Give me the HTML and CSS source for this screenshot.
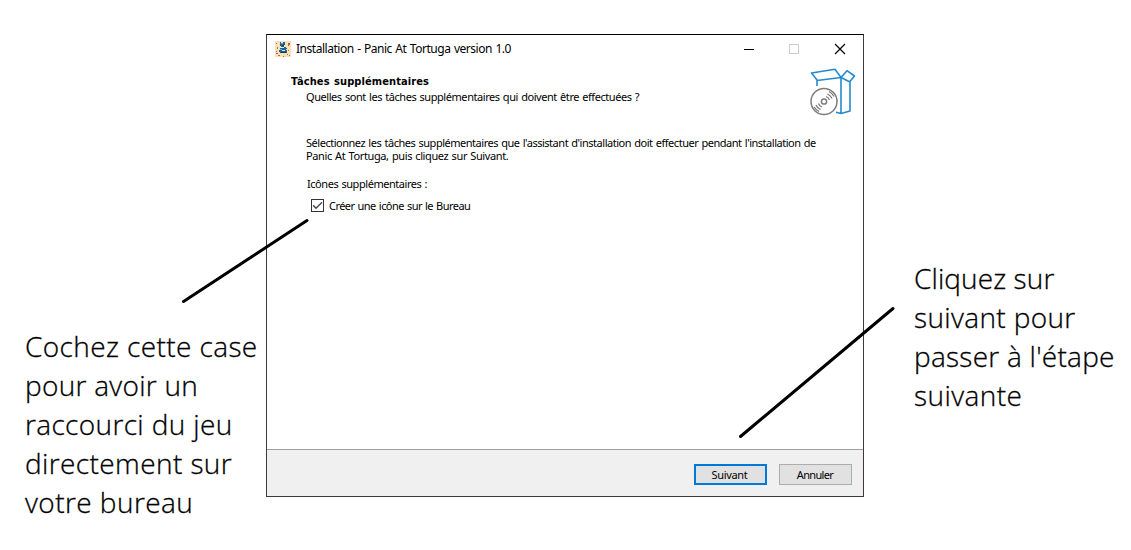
FILE: index.html
```html
<!DOCTYPE html>
<html lang="fr">
<head>
<meta charset="utf-8">
<title>Installation - Panic At Tortuga</title>
<link rel="stylesheet" href="styles.css">
</head>
<body>
<main class="guide">
  <aside class="note note-left">
    <span class="l1">Cochez cette case</span><span class="l2">pour avoir un</span><span class="l3">raccourci du jeu</span><span class="l4">directement sur</span><span class="l5">votre bureau</span>
  </aside>
  <section class="window">
    <header class="titlebar">
      <svg class="app-icon" width="16" height="16" viewBox="0 0 16 16" shape-rendering="crispEdges">
        <rect width="16" height="16" fill="#fbdfb5"/>
        <path fill="#1c639c" d="M5 1h1v1h2V1h2v3H9v2h2v1h1v1h-1v1h1v3H5v-1H4V9h1V7h1V5H5z"/>
        <path fill="#70a9c9" d="M6 2h2v1H6zM5 8h2v1H5z"/>
        <path fill="#efe4cf" d="M6 6h3v1H6zM7 9h3v1H7z"/>
        <path fill="#17344f" d="M6 11h5v1H6zM7 4h2v1H7z"/>
        <path fill="#c7553c" d="M13 2h2v2h-1v1h-1zM1 12h2v1H1zM12 13h1v1h-1z"/>
        <path fill="#927865" d="M1 2h1v1H1zM2 6h1v2H2zM3 14h2v1H3zM13 9h1v1h-1zM14 14h1v1h-1zM8 15h1v1H8zM1 10h1v1H1z"/>
      </svg>
      <h1 class="title">Installation - Panic At Tortuga version 1.0</h1>
      <svg class="controls" width="103" height="12" viewBox="0 0 103 12" fill="none" shape-rendering="crispEdges">
        <path d="M0 6.500h10" stroke="#000"/>
        <rect x="45.500" y="1.500" width="9" height="9" stroke="#ccc"/>
        <path d="M91 1l10 10M101 1L91 11" stroke="#000" stroke-width="1.200" shape-rendering="auto"/>
      </svg>
    </header>
    <div class="heading">
      <div class="heading-text">
        <h2>Tâches supplémentaires</h2>
        <p class="question">Quelles sont les tâches supplémentaires qui doivent être effectuées ?</p>
      </div>
      <svg class="box" width="46" height="50" viewBox="0 0 46 50" fill="none">
        <g stroke="#2589d0" stroke-width="1.600" stroke-linejoin="round">
          <path d="M7 18V12L1.500 5 25 1.200 31 9.500 7 12.500M31 9.500v36l9-2.500V14L31 9.500l6-6.800 7.500 5.300-5 6M31 45.500l-5-1.300"/>
        </g>
        <g stroke="#7d7d7d" stroke-width="1.500">
          <circle cx="14" cy="33.500" r="13"/><circle cx="14" cy="33.500" r="2.600"/>
          <path d="M16 28.500a6 6 0 0 1 3.500 3.500M17.500 26a8.500 8.500 0 0 1 4.500 4.500M19 23.500a11 11 0 0 1 5 5M12 39a6 6 0 0 1-3.500-3.500M10.500 41.500a8.500 8.500 0 0 1-4.500-4.500M9 43.500a11 11 0 0 1-4.800-4.500" stroke-width="1.300"/>
        </g>
      </svg>
    </div>
    <div class="content">
      <p class="intro"><span class="intro1">Sélectionnez les tâches supplémentaires que l'assistant d'installation doit effectuer pendant l'installation de</span><span class="intro2">Panic At Tortuga, puis cliquez sur Suivant.</span></p>
      <p class="group">Icônes supplémentaires :</p>
      <div class="option">
        <svg width="13" height="13" viewBox="0 0 13 13" fill="none"><rect x=".5" y=".5" width="12" height="12" stroke="#333"/><path d="M2.200 6.200l2.800 3L11 3.200" stroke="#444" stroke-width="1.300"/></svg>
        <span class="option-label">Créer une icône sur le Bureau</span>
      </div>
    </div>
    <footer class="footer">
      <div class="button primary"><span>Suivant</span></div>
      <div class="button cancel"><span>Annuler</span></div>
    </footer>
  </section>
  <aside class="note note-right">
    <span class="r1">Cliquez sur</span><span class="r2">suivant pour</span><span class="r3">passer à l'étape</span><span class="r4">suivante</span>
  </aside>
  <svg class="pointers" width="1131" height="550" viewBox="0 0 1131 550" stroke="#000" stroke-width="3" stroke-linecap="round">
    <path d="M183.500 301.500L307 220.500M740.500 436.500L893 308.500"/>
  </svg>
</main>
</body>
</html>
```
FILE: styles.css
```css
* { box-sizing: border-box; margin: 0; padding: 0; }
body { background: #fff; color: #000; overflow: hidden; }
svg { display: block; flex: none; }
span { white-space: nowrap; }
.guide { position: relative; display: grid; grid-template-columns: 266px 598px 267px; width: 1131px; height: 550px; padding-top: 34px; }
.note { display: flex; flex-direction: column; align-items: flex-start; font: 300 28px/39px "Open Sans", "Noto Sans", sans-serif; -webkit-text-stroke: .3px #000; }
.note-left { padding: 293px 0 0 25px; }
.note-right { padding: 225px 0 0 50px; }
.l1 { letter-spacing: .4px; }
.l2 { letter-spacing: .28px; }
.l3 { letter-spacing: .36px; }
.l4 { letter-spacing: .4px; }
.l5 { letter-spacing: .44px; }
.r1 { letter-spacing: .1px; }
.r2 { letter-spacing: .36px; }
.r3 { letter-spacing: .26px; }
.r4 { letter-spacing: .42px; }
.window { display: flex; flex-direction: column; height: 463px; border: 1px solid #40383a; border-top-color: #000; font: 11px/13px "Noto Sans", sans-serif; word-spacing: .8px; }
.titlebar { display: flex; align-items: center; height: 27px; padding: 0 16px 0 8px; }
.title { margin-left: 5px; font-size: 12px; font-weight: 400; line-height: 16px; letter-spacing: -.47px; white-space: nowrap; }
.controls { margin-left: auto; }
.heading { display: flex; justify-content: space-between; height: 64px; padding: 6px 7px 0 24px; }
.heading-text { padding-top: 7px; }
.heading h2 { font: bold 11px/13px "DejaVu Sans Condensed", "DejaVu Sans", sans-serif; letter-spacing: .1px; white-space: nowrap; }
.question { margin: 2px 0 0 15px; letter-spacing: -.44px; white-space: nowrap; }
.content { flex: 1; padding: 10px 0 0 39px; }
.intro { display: flex; flex-direction: column; align-items: flex-start; }
.intro1 { letter-spacing: -.475px; }
.intro2 { letter-spacing: -.39px; }
.group { margin: 15px 0 0 1px; letter-spacing: -.45px; }
.option { display: flex; align-items: center; gap: 5px; margin: 9px 0 0 5px; }
.option-label { letter-spacing: -.55px; }
.footer { display: flex; justify-content: flex-end; gap: 12px; height: 47px; padding: 14px 11px 0 0; border-top: 1px solid #a0a0a0; background: #f0f0f0; }
.button { display: flex; align-items: center; justify-content: center; width: 73px; height: 21px; border: 1px solid #adadad; background: #e1e1e1; letter-spacing: -.3px; }
.primary { padding-right: 2px; border: 2px solid #0078d7; }
.cancel { padding-right: 1px; letter-spacing: -.65px; }
.pointers { position: absolute; left: 0; top: 0; }
```
